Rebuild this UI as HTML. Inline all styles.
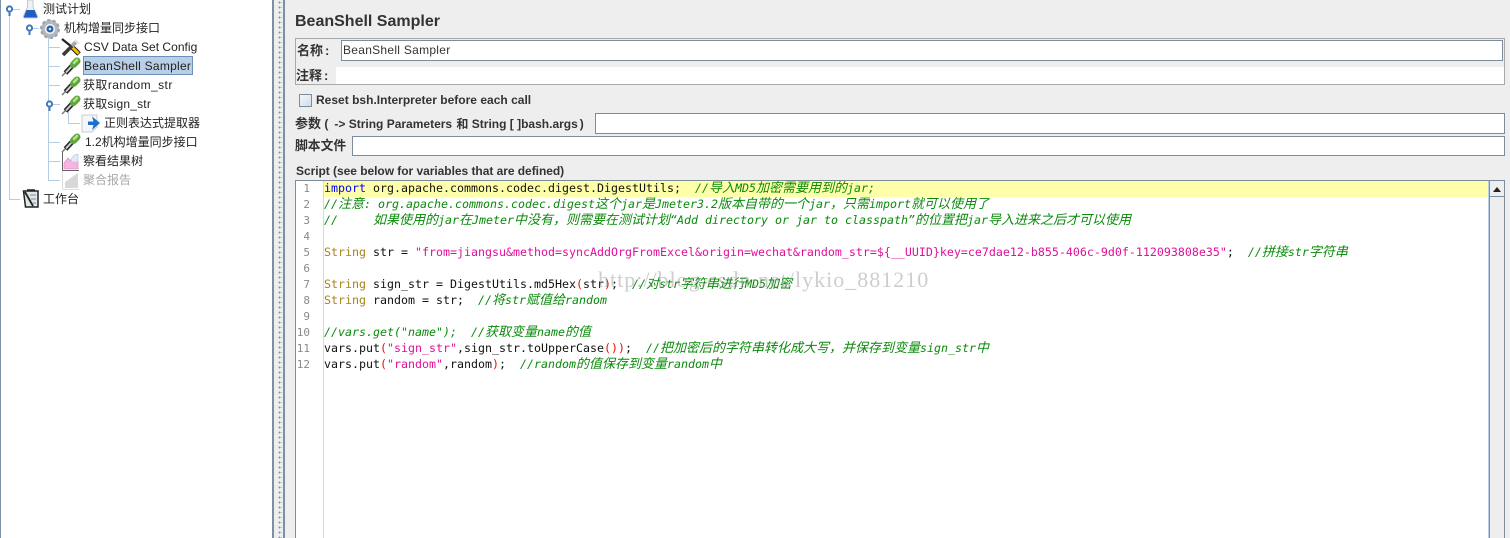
<!DOCTYPE html>
<html><head><meta charset="utf-8"><style>
html,body{margin:0;padding:0}
body{width:1510px;height:538px;overflow:hidden;position:relative;background:#eee;font-family:"Liberation Sans","Noto Sans CJK SC",sans-serif;color:#222}
.a{position:absolute}
.t{position:absolute;font-size:12px;line-height:16px;white-space:nowrap}
.l{position:absolute;font-size:12px;line-height:16px;font-weight:bold;white-space:nowrap;color:#333}
.in{position:absolute;background:#fff;box-sizing:border-box;border:1px solid #7d8c9b}
.r{position:absolute;left:324px;height:16px;line-height:16px;font-family:"DejaVu Sans Mono",monospace;font-size:11.63px;white-space:pre;color:#111}
.n{position:absolute;left:296px;width:14px;text-align:right;height:16px;line-height:16px;font-family:"DejaVu Sans Mono",monospace;font-size:11px;color:#8a8a8a}
.r b{font-weight:normal;font-family:"Noto Sans CJK SC",sans-serif;font-size:13px;line-height:0}
.c{color:#0a8a0a;font-style:italic}.s{color:#e0109a}.k{color:#a88418}.p{color:#f00}.i{color:#00f}
</style></head><body>
<div class="a" style="left:0;top:0;width:272px;height:538px;background:#fff;border-left:1px solid #7d93a8;box-sizing:border-box"></div>
<div class="a" style="left:272px;top:0;width:2px;height:538px;background:#7d8fa3"></div>
<div class="a" style="left:278px;top:0;width:4px;height:538px;background-image:radial-gradient(circle,#7d93a8 .8px,transparent 1px);background-size:3px 5px"></div>
<div class="a" style="left:283px;top:0;width:2px;height:538px;background:#7d8fa3"></div>

<svg class="a" style="left:0;top:0" width="272" height="215" viewBox="0 0 272 215">
<defs>
<symbol id="d" viewBox="0 0 20 20"><path d="M1 19L6 14" stroke="#777" stroke-width="1.4"/><path d="M4.500 16L11 9" stroke="#2a2a2a" stroke-width="5"/><path d="M5 15.500L10.500 9.500" stroke="#d4d4d4" stroke-width="1.800"/><path d="M12.500 7.500L16 4" stroke="#5da83c" stroke-width="7" stroke-linecap="round"/><path d="M13 6L16 3" stroke="#b8e08c" stroke-width="2.500" stroke-linecap="round"/></symbol>
</defs>
<g stroke="#b5cde4" fill="none" stroke-width="1">
<path d="M9.500 15V199.500H20M29.500 28.500H39M48.500 36V180.500H60M48.500 47.500H60M48.500 66.500H60M48.500 85.500H60M48.500 104.500H60M48.500 142.500H60M48.500 161.500H60M68.500 112V123.500H80M20 9.500H9"/>
</g>
<g fill="#fff" stroke="#3f78b8" stroke-width="2"><path d="M9.500 12V16M29.500 31V35M49.500 107V111" fill="none"/><circle cx="9.500" cy="9" r="2.600"/><circle cx="29.500" cy="28" r="2.600"/><circle cx="49.500" cy="104" r="2.600"/></g>
<!-- flask -->
<path d="M27.500 0H33V7L37.500 16Q37.500 18 35.500 18H25.500Q23.500 18 23.500 16L27.500 7Z" fill="#eef2f6" stroke="#b4bdc6" stroke-width=".8"/>
<path d="M26.500 10H34.500L37.500 17.500H23.500Z" fill="#1f5fc4"/>
<!-- gear -->
<circle cx="50" cy="29" r="7" fill="none" stroke="#b4b9bf" stroke-width="4"/>
<circle cx="50" cy="29" r="8.800" fill="none" stroke="#a0a6ad" stroke-width="2.500" stroke-dasharray="3 2.500"/>
<circle cx="50" cy="29" r="5" fill="#f0f4f8"/><circle cx="50" cy="29" r="3.500" fill="#2b5f9e"/><circle cx="50" cy="29" r="1.300" fill="#cfe0f2"/>
<!-- tools -->
<path d="M62 39L72 47" stroke="#222" stroke-width="2.200"/>
<path d="M71 46L79 54" stroke="#222" stroke-width="5"/><path d="M71.500 46.500L78.500 53.500" stroke="#f0c20c" stroke-width="3"/>
<path d="M63 55L73 45" stroke="#3a3a3a" stroke-width="3.500"/><path d="M72 46L76 42" stroke="#a8a8a8" stroke-width="4"/><path d="M75 40L79 44" stroke="#e4e4e4" stroke-width="2.500"/>
<use href="#d" x="61" y="57" width="20" height="20"/>
<use href="#d" x="61" y="76" width="20" height="20"/>
<use href="#d" x="61" y="95" width="20" height="20"/>
<use href="#d" x="61" y="133" width="20" height="20"/>
<!-- doc -->
<path d="M82 115H97V127L92 132H82Z" fill="#f5f6f8" stroke="#c8ced5"/>
<path d="M92 116.500L100 123L92 130L93.500 125H88V121.500H93.500Z" fill="#1c6fd0"/>
<!-- chart -->
<path d="M62.500 152V170.500H79" fill="none" stroke="#666"/>
<path d="M64 169V163L68 158L72 162L78 161V169Z" fill="#f6b4e2" stroke="#dc80bc" stroke-width=".6"/>
<path d="M71 162Q71 155 78 154V162Z" fill="#dfecf8" stroke="#a6c2dc" stroke-width=".6"/>
<path d="M62.500 171V189.500H79" fill="none" stroke="#ddd"/>
<path d="M65 188V182L72 177L78 173V188Z" fill="#d8d8d8"/>
<!-- workbench -->
<path d="M23.500 191H38V207H25.500Z" fill="#e2e6e8" stroke="#222" stroke-width="1.500"/>
<path d="M30 195H36M31 199H36M33 203H36" stroke="#888" stroke-width="1"/>
<path d="M25 192L33 206" stroke="#222" stroke-width="1.800"/><path d="M27 190H35" stroke="#222" stroke-width="1.500"/>
</svg>

<div class="a" style="left:83px;top:56px;width:110px;height:19px;background:#b8cfe5;border:1px solid #6d8fbb;box-sizing:border-box"></div>
<div class="t" style="left:43px;top:1px">测试计划</div>
<div class="t" style="left:64px;top:20px">机构增量同步接口</div>
<div class="t" style="left:84px;top:39px;letter-spacing:.03px">CSV Data Set Config</div>
<div class="t" style="left:84px;top:58px;letter-spacing:.26px">BeanShell Sampler</div>
<div class="t" style="left:83px;top:77px;letter-spacing:.42px">获取random_str</div>
<div class="t" style="left:83px;top:96px;letter-spacing:.2px">获取sign_str</div>
<div class="t" style="left:104px;top:115px">正则表达式提取器</div>
<div class="t" style="left:85px;top:134px">1.2机构增量同步接口</div>
<div class="t" style="left:83px;top:153px">察看结果树</div>
<div class="t" style="left:83px;top:172px;color:#a8a8a8">聚合报告</div>
<div class="t" style="left:43px;top:191px">工作台</div>

<div class="l" style="left:295px;top:12px;font-size:16px;line-height:20px">BeanShell Sampler</div>
<div class="a" style="left:295px;top:38px;width:1210px;height:47px;border:1px solid #a8a8a8;box-sizing:border-box"></div>
<div class="l" style="left:297px;top:43px;font-size:13px">名称<span style="margin-left:2px">:</span></div>
<div class="in" style="left:341px;top:40px;width:1162px;height:21px"></div>
<div class="t" style="left:343px;top:42px;color:#333;letter-spacing:.28px">BeanShell Sampler</div>
<div class="l" style="left:296px;top:68px;font-size:13px">注释<span style="margin-left:2px">:</span></div>
<div class="a" style="left:336px;top:67px;width:1168px;height:17px;background:#fff"></div>
<div class="a" style="left:299px;top:94px;width:13px;height:13px;box-sizing:border-box;border:1px solid #7d8c9b;background:linear-gradient(135deg,#f4f7fb,#cfdceb)"></div>
<div class="l" style="left:316px;top:92px;letter-spacing:.01px">Reset bsh.Interpreter before each call</div>
<div class="l" style="left:295px;top:116px"><span style="font-size:13px">参数</span> (<span style="margin-left:6px">-&gt;</span> String Parameters <span style="margin-left:1px">和</span> String [ ]bash.args<span style="margin-left:2px">)</span></div>
<div class="in" style="left:595px;top:113px;width:910px;height:21px"></div>
<div class="l" style="left:295px;top:138px;font-size:12.8px">脚本文件</div>
<div class="in" style="left:352px;top:136px;width:1153px;height:20px"></div>
<div class="l" style="left:296px;top:163px;letter-spacing:-.04px">Script (see below for variables that are defined)</div>

<div class="a" style="left:295px;top:180px;width:1210px;height:358px;background:#fff;border:1px solid #7d8c9b;border-bottom:0;box-sizing:border-box"></div>
<div class="a" style="left:323px;top:181px;width:1px;height:357px;background:#d8d8d8"></div>
<div class="a" style="left:324px;top:181px;width:1165px;height:16px;background:#ffffaa"></div>
<div class="a" style="left:1489px;top:181px;width:15px;height:357px;background:#eee;border-left:1px solid #7d8fa3;box-sizing:border-box"></div>
<div class="a" style="left:1488px;top:181px;width:1px;height:357px;background:#b8cfe5"></div>
<div class="a" style="left:1490px;top:181px;width:14px;height:16px;background:#eee;border-bottom:1px solid #7d8fa3;box-sizing:border-box"></div>
<div class="a" style="left:1493px;top:187px;width:0;height:0;border:4px solid transparent;border-top:0;border-bottom:5px solid #222"></div>

<div class="n" style="top:181px">1</div><div class="n" style="top:197px">2</div><div class="n" style="top:213px">3</div><div class="n" style="top:229px">4</div><div class="n" style="top:245px">5</div><div class="n" style="top:261px">6</div><div class="n" style="top:277px">7</div><div class="n" style="top:293px">8</div><div class="n" style="top:309px">9</div><div class="n" style="top:325px">10</div><div class="n" style="top:341px">11</div><div class="n" style="top:357px">12</div>

<div class="r" style="top:180px"><span class="i">import</span> org.apache.commons.codec.digest.DigestUtils;  <span class="c">//<b>导入</b>MD5<b>加密需要用到的</b>jar;</span></div>
<div class="r c" style="top:196px">//<b>注意</b>: org.apache.commons.codec.digest<b>这个</b>jar<b>是</b>Jmeter3.2<b>版本自带的一个</b>jar<b>&#xFF0C;只需</b>import<b>就可以使用了</b></div>
<div class="r c" style="top:212px">//     <b>如果使用的</b>jar<b>在</b>Jmeter<b>中没有&#xFF0C;则需要在测试计划</b>“Add directory or jar to classpath”<b>的位置把</b>jar<b>导入进来之后才可以使用</b></div>
<div class="r" style="top:244px"><span class="k">String</span> str = <span class="s">"from=jiangsu&amp;method=syncAddOrgFromExcel&amp;origin=wechat&amp;random_str=${__UUID}key=ce7dae12-b855-406c-9d0f-112093808e35"</span>;  <span class="c">//<b>拼接</b>str<b>字符串</b></span></div>
<div class="r" style="top:276px"><span class="k">String</span> sign_str = DigestUtils.md5Hex<span class="p">(</span>str<span class="p">)</span>;  <span class="c">//<b>对</b>str<b>字符串进行</b>MD5<b>加密</b></span></div>
<div class="r" style="top:292px"><span class="k">String</span> random = str;  <span class="c">//<b>将</b>str<b>赋值给</b>random</span></div>
<div class="r c" style="top:324px">//vars.get("name");  //<b>获取变量</b>name<b>的值</b></div>
<div class="r" style="top:340px">vars.put<span class="p">(</span><span class="s">"sign_str"</span>,sign_str.toUpperCase<span class="p">())</span>;  <span class="c">//<b>把加密后的字符串转化成大写&#xFF0C;并保存到变量</b>sign_str<b>中</b></span></div>
<div class="r" style="top:356px">vars.put<span class="p">(</span><span class="s">"random"</span>,random<span class="p">)</span>;  <span class="c">//random<b>的值保存到变量</b>random<b>中</b></span></div>

<div class="a" style="left:598px;top:268px;font-family:'Liberation Serif',serif;font-size:22px;line-height:24px;white-space:nowrap;color:rgba(130,130,130,.4);letter-spacing:1px">http://blog.csdn.net/lykio_881210</div>
</body></html>
